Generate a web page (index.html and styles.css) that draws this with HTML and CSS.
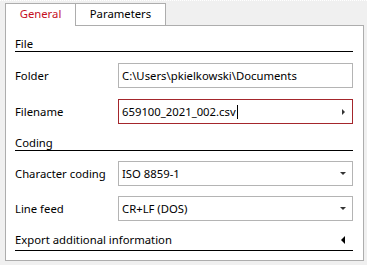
FILE: index.html
```html
<!DOCTYPE html>
<html lang="en">
<head>
  <meta charset="UTF-8" />
  <title>Export settings</title>
  <link rel="stylesheet" href="styles.css">
</head>
<body>
  <div class="tabs">
    <div class="tab active">General</div>
    <div class="tab">Parameters</div>
  </div>

  <div class="panel">
    <div class="heading">File</div>
    <div class="row">
      <span class="label">Folder</span>
      <div class="field">C:\Users\pkielkowski\Documents</div>
    </div>
    <div class="row">
      <span class="label">Filename</span>
      <div class="field invalid">659100_2021_002.csv<span class="caret"></span><span class="arrow-right"></span></div>
    </div>

    <div class="heading coding">Coding</div>
    <div class="row tight">
      <span class="label">Character coding</span>
      <div class="field">ISO 8859-1<span class="arrow-down"></span></div>
    </div>
    <div class="row tight">
      <span class="label">Line feed</span>
      <div class="field">CR+LF (DOS)<span class="arrow-down"></span></div>
    </div>

    <div class="heading expander">Export additional information<span class="arrow-left"></span></div>
  </div>
</body>
</html>
```

FILE: styles.css
```css
body {
  margin: 0;
  background: #f0f0f0;
  border-top: 1px dotted #fff;
  color: #000;
  font-family: 'Segoe UI', 'Noto Sans', sans-serif;
  font-size: 11.3px;
}

.tabs {
  display: flex;
  align-items: flex-start;
  height: 22px;
  padding: 2px 0 0 5px;
}

.tab {
  box-sizing: border-box;
  height: 22px;
  line-height: 20px;
  text-align: center;
  background: #fff;
  border: 1px solid #adadad;
  border-bottom: none;
}

.tab.active {
  width: 71px;
  height: 23px;
  margin-bottom: -1px;
  color: #c50f1f;
  position: relative;
  z-index: 1;
}

.tab + .tab {
  width: 90px;
  border-left: none;
}

.panel {
  margin: 0 3px 0 5px;
  padding: 0 10px 9px 9px;
  background: #fff;
  border: 1px solid #adadad;
}

.heading {
  display: flex;
  align-items: center;
  padding-top: 10px;
  line-height: 15px;
  border-bottom: 1px solid #000;
}

.heading.coding {
  padding-top: 11px;
}

.heading.expander {
  padding: 11px 0 3px;
}

.row {
  display: flex;
  align-items: center;
  height: 25px;
  margin-top: 11px;
}

.row.tight {
  margin-top: 10px;
}

.label {
  width: 103px;
}

.field {
  flex: 1;
  box-sizing: border-box;
  height: 25px;
  display: flex;
  align-items: center;
  padding: 0 6px 0 3px;
  border: 1px solid #b4b4b4;
  white-space: nowrap;
}

.field.invalid {
  border-color: #a4262c;
}

.caret {
  display: inline-block;
  width: 0;
  height: 14px;
  margin-left: 1px;
  border-left: 1px solid #000;
}

.arrow-down {
  margin-left: auto;
  border-left: 3px solid transparent;
  border-right: 3px solid transparent;
  border-top: 3px solid #333;
}

.arrow-right {
  margin-left: auto;
  margin-right: 1px;
  border-top: 3px solid transparent;
  border-bottom: 3px solid transparent;
  border-left: 3px solid #333;
}

.arrow-left {
  margin-left: auto;
  margin-right: 8px;
  border-top: 4px solid transparent;
  border-bottom: 4px solid transparent;
  border-right: 4px solid #000;
}
```
